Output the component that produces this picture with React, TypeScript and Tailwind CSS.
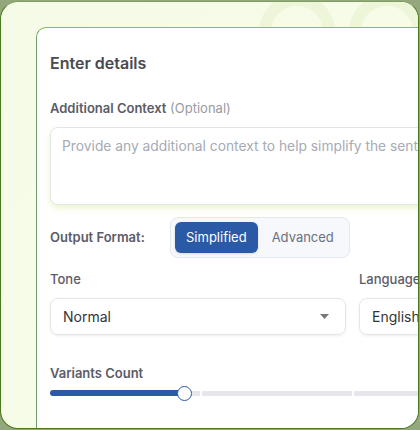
export default function App() {
  const font = { fontFamily: "Inter, 'Noto Sans', sans-serif" };
  return (
    <div className="w-[420px] h-[430px] bg-[#93a87c] pt-px overflow-hidden" style={font}>
      <div className="relative w-[419px] h-[428px] rounded-[18px] border border-[#4a7a1c] border-t-[#7f9e63] bg-gradient-to-br from-[#f6fbe8] via-[#f7fce9] to-[#f8fceb] overflow-hidden pl-[35px] pt-[25px]">
        {/* decorative rings */}
        <div className="absolute left-[258px] top-[-8px] w-[76px] h-[76px] rounded-full border-[12px] border-[#eef6da]" />
        <div className="absolute left-[348px] top-[-8px] w-[76px] h-[76px] rounded-full border-[12px] border-[#eef6da]" />

        <div className="relative w-[640px] h-[420px] bg-white rounded-tl-[10px] border-l border-t border-[#8cbb5c] border-l-[#6f9c6a] pl-[13px] pt-[23px]">
          <h2 className="text-[16px] leading-6 font-semibold text-[#4a4a4e]">Enter details</h2>

          <div className="mt-[23px] text-[13px] leading-5 text-[#5c5c68]">
            <span className="font-semibold">Additional Context</span>{" "}
            <span className="text-[#9a9aa3]">(Optional)</span>
          </div>
          <div className="mt-[9px] w-[605px] h-[78px] rounded-[8px] border border-[#e3e5e8] bg-white shadow-[0_3px_6px_rgba(214,238,160,0.55)] pl-[11px] pt-[6px] text-[13.8px] leading-6 text-[#a6abb4]">
            Provide any additional context to help simplify the sentence
          </div>

          <div className="mt-[12px] flex items-center">
            <span className="w-[120px] text-[13px] font-semibold text-[#5c5c68]">Output Format:</span>
            <div className="flex gap-[3px] p-[4px] rounded-[8px] border border-[#e3e8f0] bg-[#f6f8fb]">
              <button className="h-[31px] px-[11px] rounded-[6px] bg-[#2a5aa6] text-white text-[13px] shadow-sm">Simplified</button>
              <button className="h-[31px] px-[11px] rounded-[6px] text-[#6b7080] text-[13px]">Advanced</button>
            </div>
          </div>

          <div className="mt-[11px] grid grid-cols-[296px_296px] gap-x-[13px] text-[13px]">
            <span className="leading-5 font-medium text-[#5c5c68]">Tone</span>
            <span className="leading-5 font-medium text-[#5c5c68]">Language</span>
            <div className="mt-[9px] h-[37px] rounded-[8px] border border-[#e3e5e8] shadow-[0_1px_3px_rgba(0,0,0,0.07)] flex items-center justify-between pl-[12px] pr-[16px] text-[14px] text-[#333338]">
              Normal
              <svg width="9" height="5" viewBox="0 0 9 5"><path d="M0 0h9L4.5 5z" fill="#76787e" /></svg>
            </div>
            <div className="mt-[9px] h-[37px] rounded-[8px] border border-[#e3e5e8] shadow-[0_1px_3px_rgba(0,0,0,0.07)] flex items-center pl-[12px] text-[14px] text-[#333338]">
              English
            </div>
          </div>

          <div className="mt-[28px] text-[13px] leading-5 font-semibold text-[#5c5c68]">Variants Count</div>
          <div className="relative mt-[3px] w-[605px] h-[14px] flex items-center gap-[2px]">
            <div className="flex-1 h-[5px] rounded-l-full bg-[#e5e7eb]" />
            <div className="flex-1 h-[5px] bg-[#e5e7eb]" />
            <div className="flex-1 h-[5px] bg-[#e5e7eb]" />
            <div className="flex-1 h-[5px] rounded-r-full bg-[#e5e7eb]" />
            <div className="absolute left-0 top-[4px] w-[134px] h-[6px] rounded-full bg-[#2a5aa6]" />
            <div className="absolute left-[127px] top-0 w-[15px] h-[15px] rounded-full bg-white border-[1.5px] border-[#2a5aa6]" />
          </div>
        </div>
      </div>
    </div>
  );
}
